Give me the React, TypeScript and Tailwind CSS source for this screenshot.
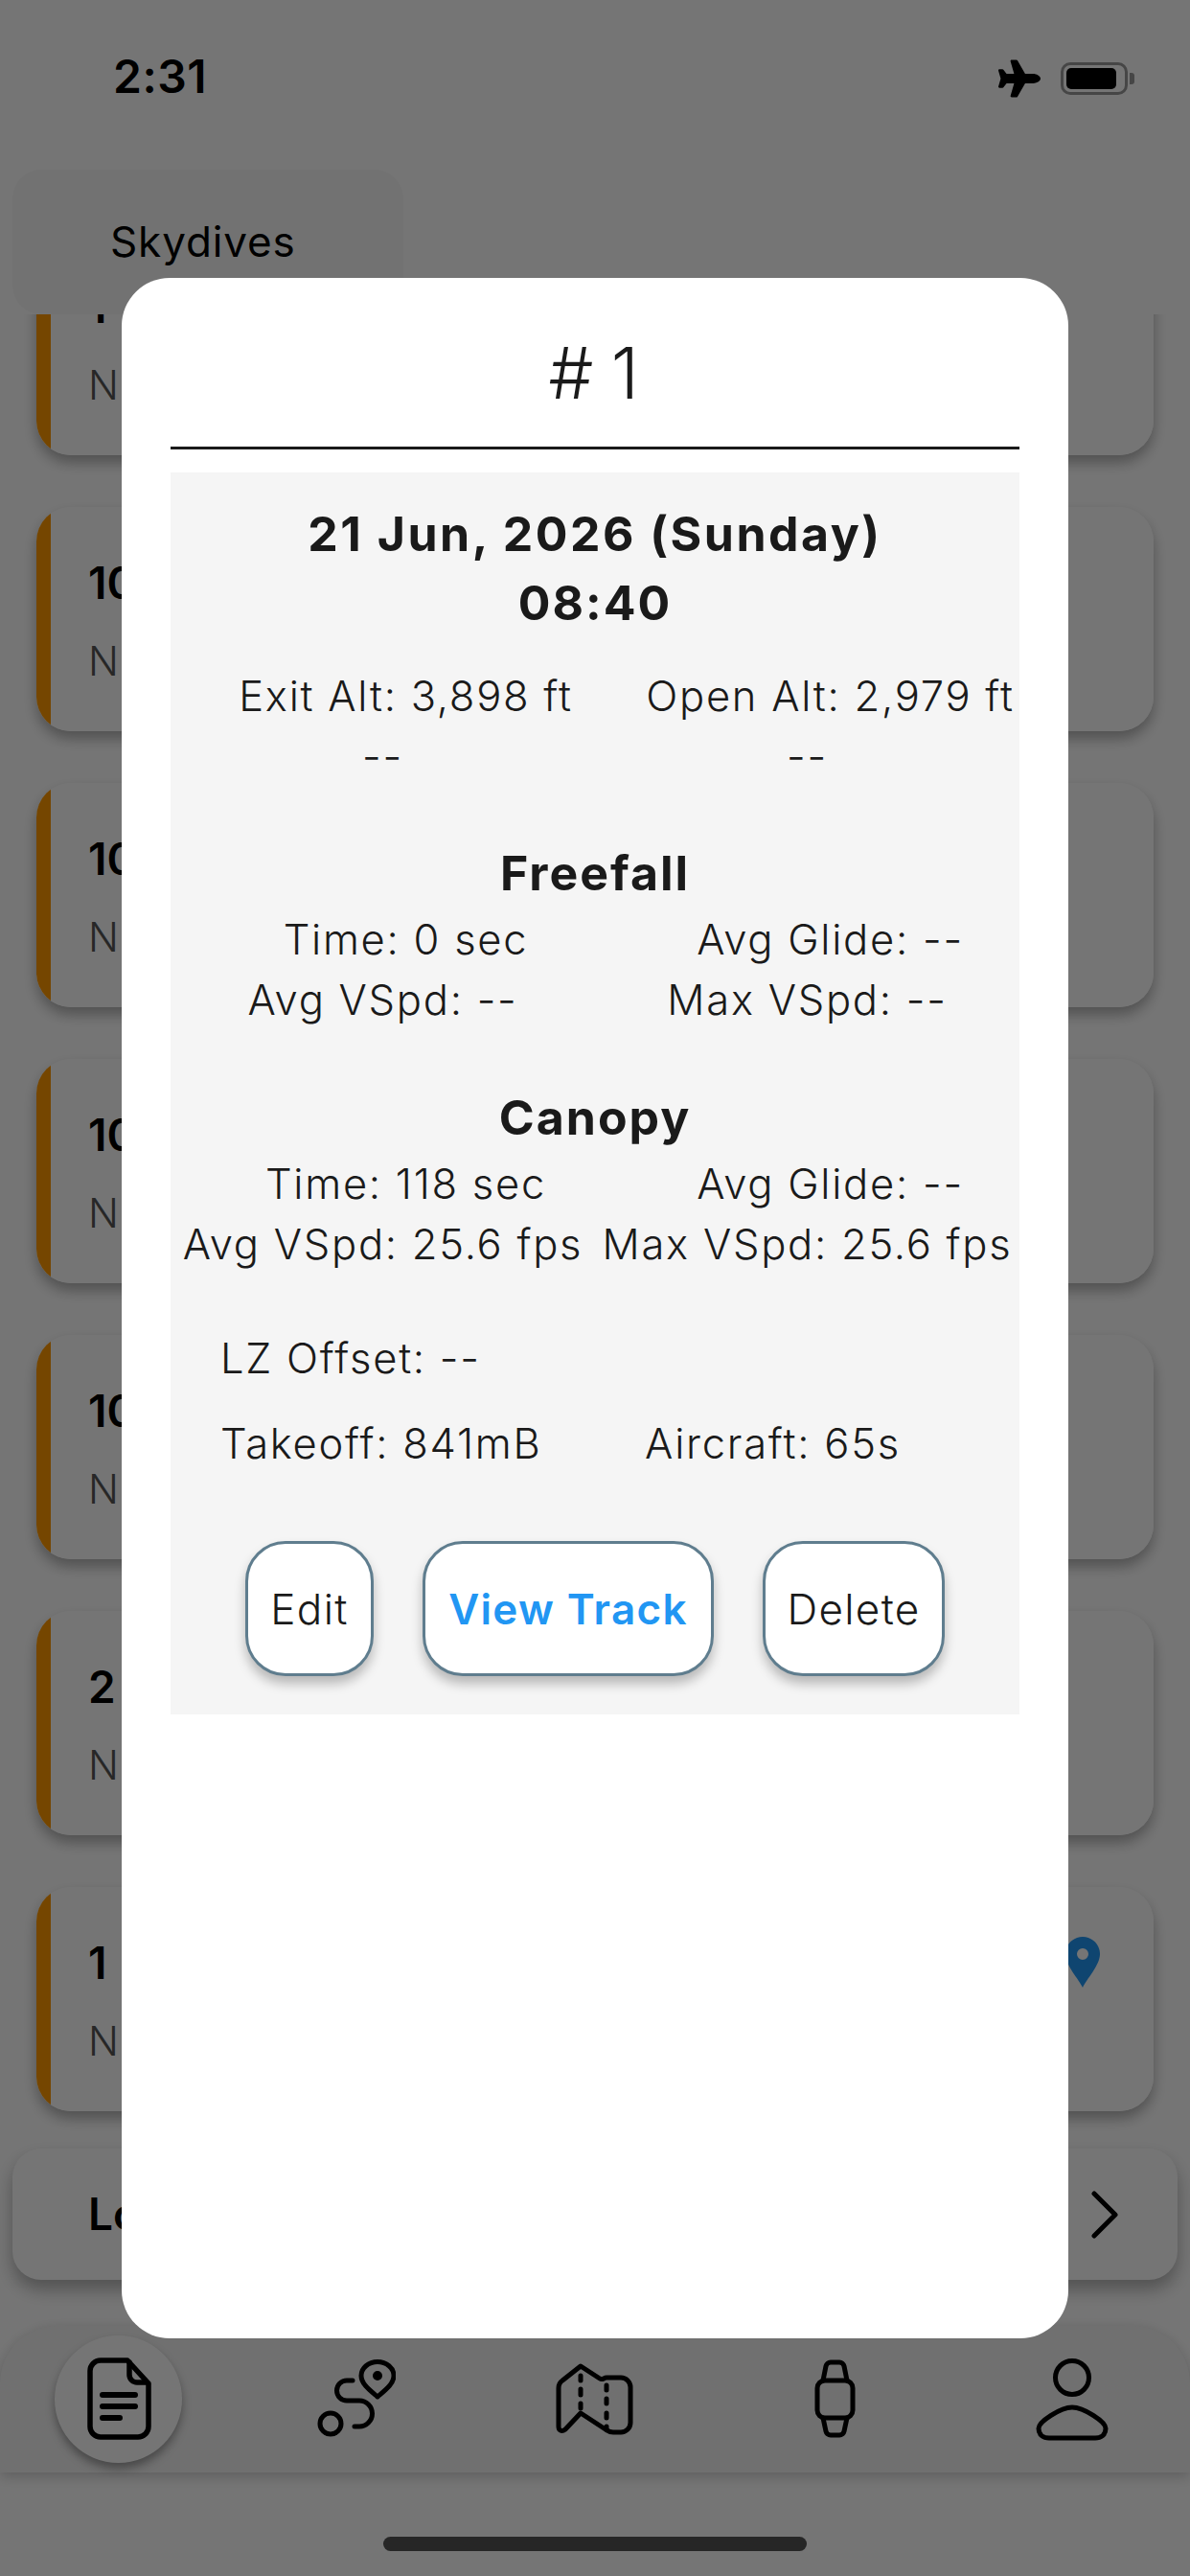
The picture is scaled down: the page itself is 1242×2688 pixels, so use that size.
import { FaPlane } from "react-icons/fa";

const font = { fontFamily: "Inter, 'Liberation Sans', sans-serif" };

const rowLabel = "text-[43.5px] leading-[63px] tracking-[0.04em] font-light text-center whitespace-nowrap";
const heading = "text-center text-[50px] leading-[60px] font-bold tracking-[0.04em]";
const actionButton = "h-[141px] rounded-[42px] border-[3px] border-[#5f7d8e] bg-white text-[44px] tracking-[0.03em] shadow-[0_8px_12px_rgba(0,0,0,0.25)]";

function StatRow({ left, right, shift }: { left: string; right: string; shift?: boolean }) {
  return (
    <div className={`grid grid-cols-[443px_443px] ${shift ? "" : "pl-[24px]"} ${rowLabel}`}>
      <span>{left}</span>
      <span>{right}</span>
    </div>
  );
}

function DocIcon() {
  return (
    <svg width="67" height="86" viewBox="0 0 67 86" fill="none" stroke="#000" strokeWidth="5.5" strokeLinecap="round" strokeLinejoin="round">
      <path d="M14 3H42L64 27V72a11 11 0 0 1-11 11H14A11 11 0 0 1 3 72V14A11 11 0 0 1 14 3Z" />
      <path d="M44 5V18a8 8 0 0 0 8 8H62" />
      <path d="M16 39H50M16 51H50M16 63H34" strokeWidth="6" />
    </svg>
  );
}

function RouteIcon() {
  return (
    <svg width="82" height="81" viewBox="0 0 82 81" fill="none" stroke="#000" strokeWidth="5" strokeLinecap="round" strokeLinejoin="round">
      <circle cx="14" cy="67" r="11" />
      <path d="M63 39C56 33 46 26 46 17a17 14.5 0 0 1 34 0C80 26 70 33 63 39Z" />
      <circle cx="63" cy="17" r="2.5" fill="#000" />
      <path d="M37 22H31a10.5 10.5 0 0 0 0 21H44a13.5 13.5 0 0 1 0 27H39" />
    </svg>
  );
}

function MapIcon() {
  return (
    <svg width="82" height="75" viewBox="0 0 82 75" fill="none" stroke="#000" strokeWidth="5" strokeLinecap="round" strokeLinejoin="round">
      <path d="M26 3L46 16C49 18 50 15 53 15H68a10 10 0 0 1 10 10V62a10 10 0 0 1-10 10H60C56 72 55 71 52 69L26 52L10 69C6 72 3 70 3 66V26C3 22 4 20 7 18Z" />
      <path d="M26 13V18M26 27V33M26 42V47M53 23V28M53 37V42M53 52V57M53 66V69" />
    </svg>
  );
}

function WatchIcon() {
  return (
    <svg width="43" height="82" viewBox="0 0 43 82" fill="none" stroke="#000" strokeWidth="5" strokeLinecap="round" strokeLinejoin="round">
      <rect x="3" y="22" width="37" height="39" rx="8" />
      <path d="M9 22L12 7a5 5 0 0 1 5-4H26a5 5 0 0 1 5 4L34 22" />
      <path d="M9 61L12 75a5 5 0 0 0 5 4H26a5 5 0 0 0 5-4L34 61" />
    </svg>
  );
}

function PersonIcon() {
  return (
    <svg width="76" height="86" viewBox="0 0 76 86" fill="none" stroke="#000" strokeWidth="5" strokeLinecap="round" strokeLinejoin="round">
      <circle cx="38" cy="20" r="17.5" />
      <path d="M38 51C50 51 73 66 73 73C73 80 68 83 62 83H14C8 83 3 80 3 73C3 66 26 51 38 51Z" />
    </svg>
  );
}

function JumpCard({ title, pin }: { title: string; pin?: boolean }) {
  return (
    <div className="relative flex h-[234px] shrink-0 rounded-[36px] shadow-[0_8px_14px_rgba(0,0,0,0.3)]">
      <div className="flex w-full overflow-hidden rounded-[36px] bg-white">
        <div className="w-[15px] shrink-0 bg-[#ff9800]" />
        <div className="pl-[39px]">
          <p className="pt-[50px] text-[46px] leading-[58px] font-semibold text-black">{title}</p>
          <p className="pt-[26px] text-[42px] leading-[54px] font-light text-[#555]">N</p>
        </div>
      </div>
      {pin && (
        <svg className="absolute left-[1074px] top-[52px]" width="36" height="53" viewBox="0 0 36 53">
          <path fillRule="evenodd" fill="#2196f3" d="M18 0C8 0 0 8 0 18C0 30 14 44 18 53C22 44 36 30 36 18C36 8 28 0 18 0ZM18 12a6 6 0 1 1 0 12a6 6 0 1 1 0-12Z" />
        </svg>
      )}
    </div>
  );
}

export default function App() {
  const titles = ["1", "10", "10", "10", "10", "2", "1"];

  return (
    <div className="relative flex h-[2688px] w-[1242px] flex-col overflow-hidden bg-white text-[#1a1a1a]" style={font}>
      <div className="flex h-[177px] shrink-0 items-start justify-between pl-[118px] pr-[58px] pt-[52px]">
        <span className="text-[48px] leading-[56px] font-semibold tracking-[0.01em] text-black">2:31</span>
        <div className="flex items-center gap-[21px] pt-[8px]">
          <FaPlane size={44} color="#000" />
          <div className="flex items-center gap-[2px]">
            <div className="flex h-[34px] w-[70px] items-center rounded-[10px] border-[3px] border-[#9a9a9a] p-[3px]">
              <div className="h-full w-[52px] rounded-[5px] bg-black" />
            </div>
            <div className="h-[12px] w-[5px] rounded-r-[3px] bg-[#9a9a9a]" />
          </div>
        </div>
      </div>

      <div className="relative z-10 ml-[13px] flex h-[151px] w-[408px] shrink-0 items-center rounded-[30px] bg-[#f9f9f9] pl-[102px] pb-[8px] text-[44px] tracking-[0.02em] text-black">
        <span className="pt-[6px]">Skydives</span>
      </div>

      <div className="h-[1914px] shrink-0 overflow-hidden px-[38px]">
        <div className="-mt-[87px] flex flex-col gap-[54px]">
          {titles.map((title, index) => (
            <JumpCard key={index} title={title} pin={index === 6} />
          ))}
        </div>
      </div>

      <div className="relative ml-[13px] flex h-[137px] w-[1216px] shrink-0 items-center rounded-[30px] bg-white pl-[79px] shadow-[0_10px_18px_rgba(0,0,0,0.3)]">
        <span className="text-[46px] font-semibold text-black">Lo</span>
        <svg className="absolute left-[1125px] top-[44px]" width="30" height="50" viewBox="0 0 30 50" fill="none" stroke="#000" strokeWidth="5" strokeLinecap="round" strokeLinejoin="round">
          <path d="M4 3L26 25L4 47" />
        </svg>
      </div>

      <div className="relative mt-[48px] flex h-[153px] shrink-0 items-start rounded-t-[60px] bg-[#f3f3f3] shadow-[0_4px_14px_rgba(0,0,0,0.2)]">
        <div className="absolute left-[57px] top-[10px] h-[133px] w-[133px] rounded-full bg-white shadow-[0_6px_10px_rgba(0,0,0,0.35)]" />
        <div className="relative flex w-full items-start pl-[91px]">
          <div className="mt-[33px]"><DocIcon /></div>
          <div className="ml-[173px] mt-[35px]"><RouteIcon /></div>
          <div className="ml-[167px] mt-[39px]"><MapIcon /></div>
          <div className="ml-[188px] mt-[35px]"><WatchIcon /></div>
          <div className="ml-[188px] mt-[34px]"><PersonIcon /></div>
        </div>
      </div>

      <div className="absolute inset-0 z-20 bg-black/[0.54]" />

      <div className="absolute left-[400px] top-[2647px] z-30 h-[15px] w-[442px] rounded-full bg-[#262626]" />

      <div className="absolute left-[127px] top-[290px] z-30 h-[2150px] w-[988px] rounded-[50px] bg-white px-[51px]">
        <h1 className="flex h-[176px] items-center justify-center pl-[16px] pt-[22px] text-[74px] font-light tracking-[0.25em] text-[#1a1a1a]">#1</h1>
        <div className="h-[3px] bg-[#1a1a1a]" />
        <div className="mt-[24px] flex h-[1296px] flex-col bg-[#f5f5f5] pt-[28px]">
          <p className="text-center text-[50px] leading-[72px] font-bold tracking-[0.05em]">21 Jun, 2026 (Sunday)</p>
          <p className="text-center text-[50px] leading-[72px] font-bold tracking-[0.04em]">08:40</p>

          <div className="mt-[30px]">
            <StatRow left="Exit Alt: 3,898 ft" right="Open Alt: 2,979 ft" />
            <StatRow left="--" right="--" shift />
          </div>

          <p className={`mt-[60px] ${heading}`}>Freefall</p>
          <div className="mt-[8px]">
            <StatRow left="Time: 0 sec" right="Avg Glide: --" />
            <StatRow left="Avg VSpd: --" right="Max VSpd: --" shift />
          </div>

          <p className={`mt-[61px] ${heading}`}>Canopy</p>
          <div className="mt-[8px]">
            <StatRow left="Time: 118 sec" right="Avg Glide: --" />
            <StatRow left="Avg VSpd: 25.6 fps" right="Max VSpd: 25.6 fps" shift />
          </div>

          <p className={`mt-[56px] pl-[52px] ${rowLabel} text-left`}>LZ Offset: --</p>
          <div className={`mt-[26px] flex pl-[52px] ${rowLabel}`}>
            <span className="w-[443px] text-left">Takeoff: 841mB</span>
            <span>Aircraft: 65s</span>
          </div>

          <div className="mt-[70px] flex justify-center gap-[51px]">
            <button type="button" className={`w-[134px] font-light ${actionButton}`}>
              Edit
            </button>
            <button type="button" className={`w-[304px] font-semibold text-[#2196f3] ${actionButton}`}>
              View Track
            </button>
            <button type="button" className={`w-[190px] font-light ${actionButton}`}>
              Delete
            </button>
          </div>
        </div>
      </div>
    </div>
  );
}
